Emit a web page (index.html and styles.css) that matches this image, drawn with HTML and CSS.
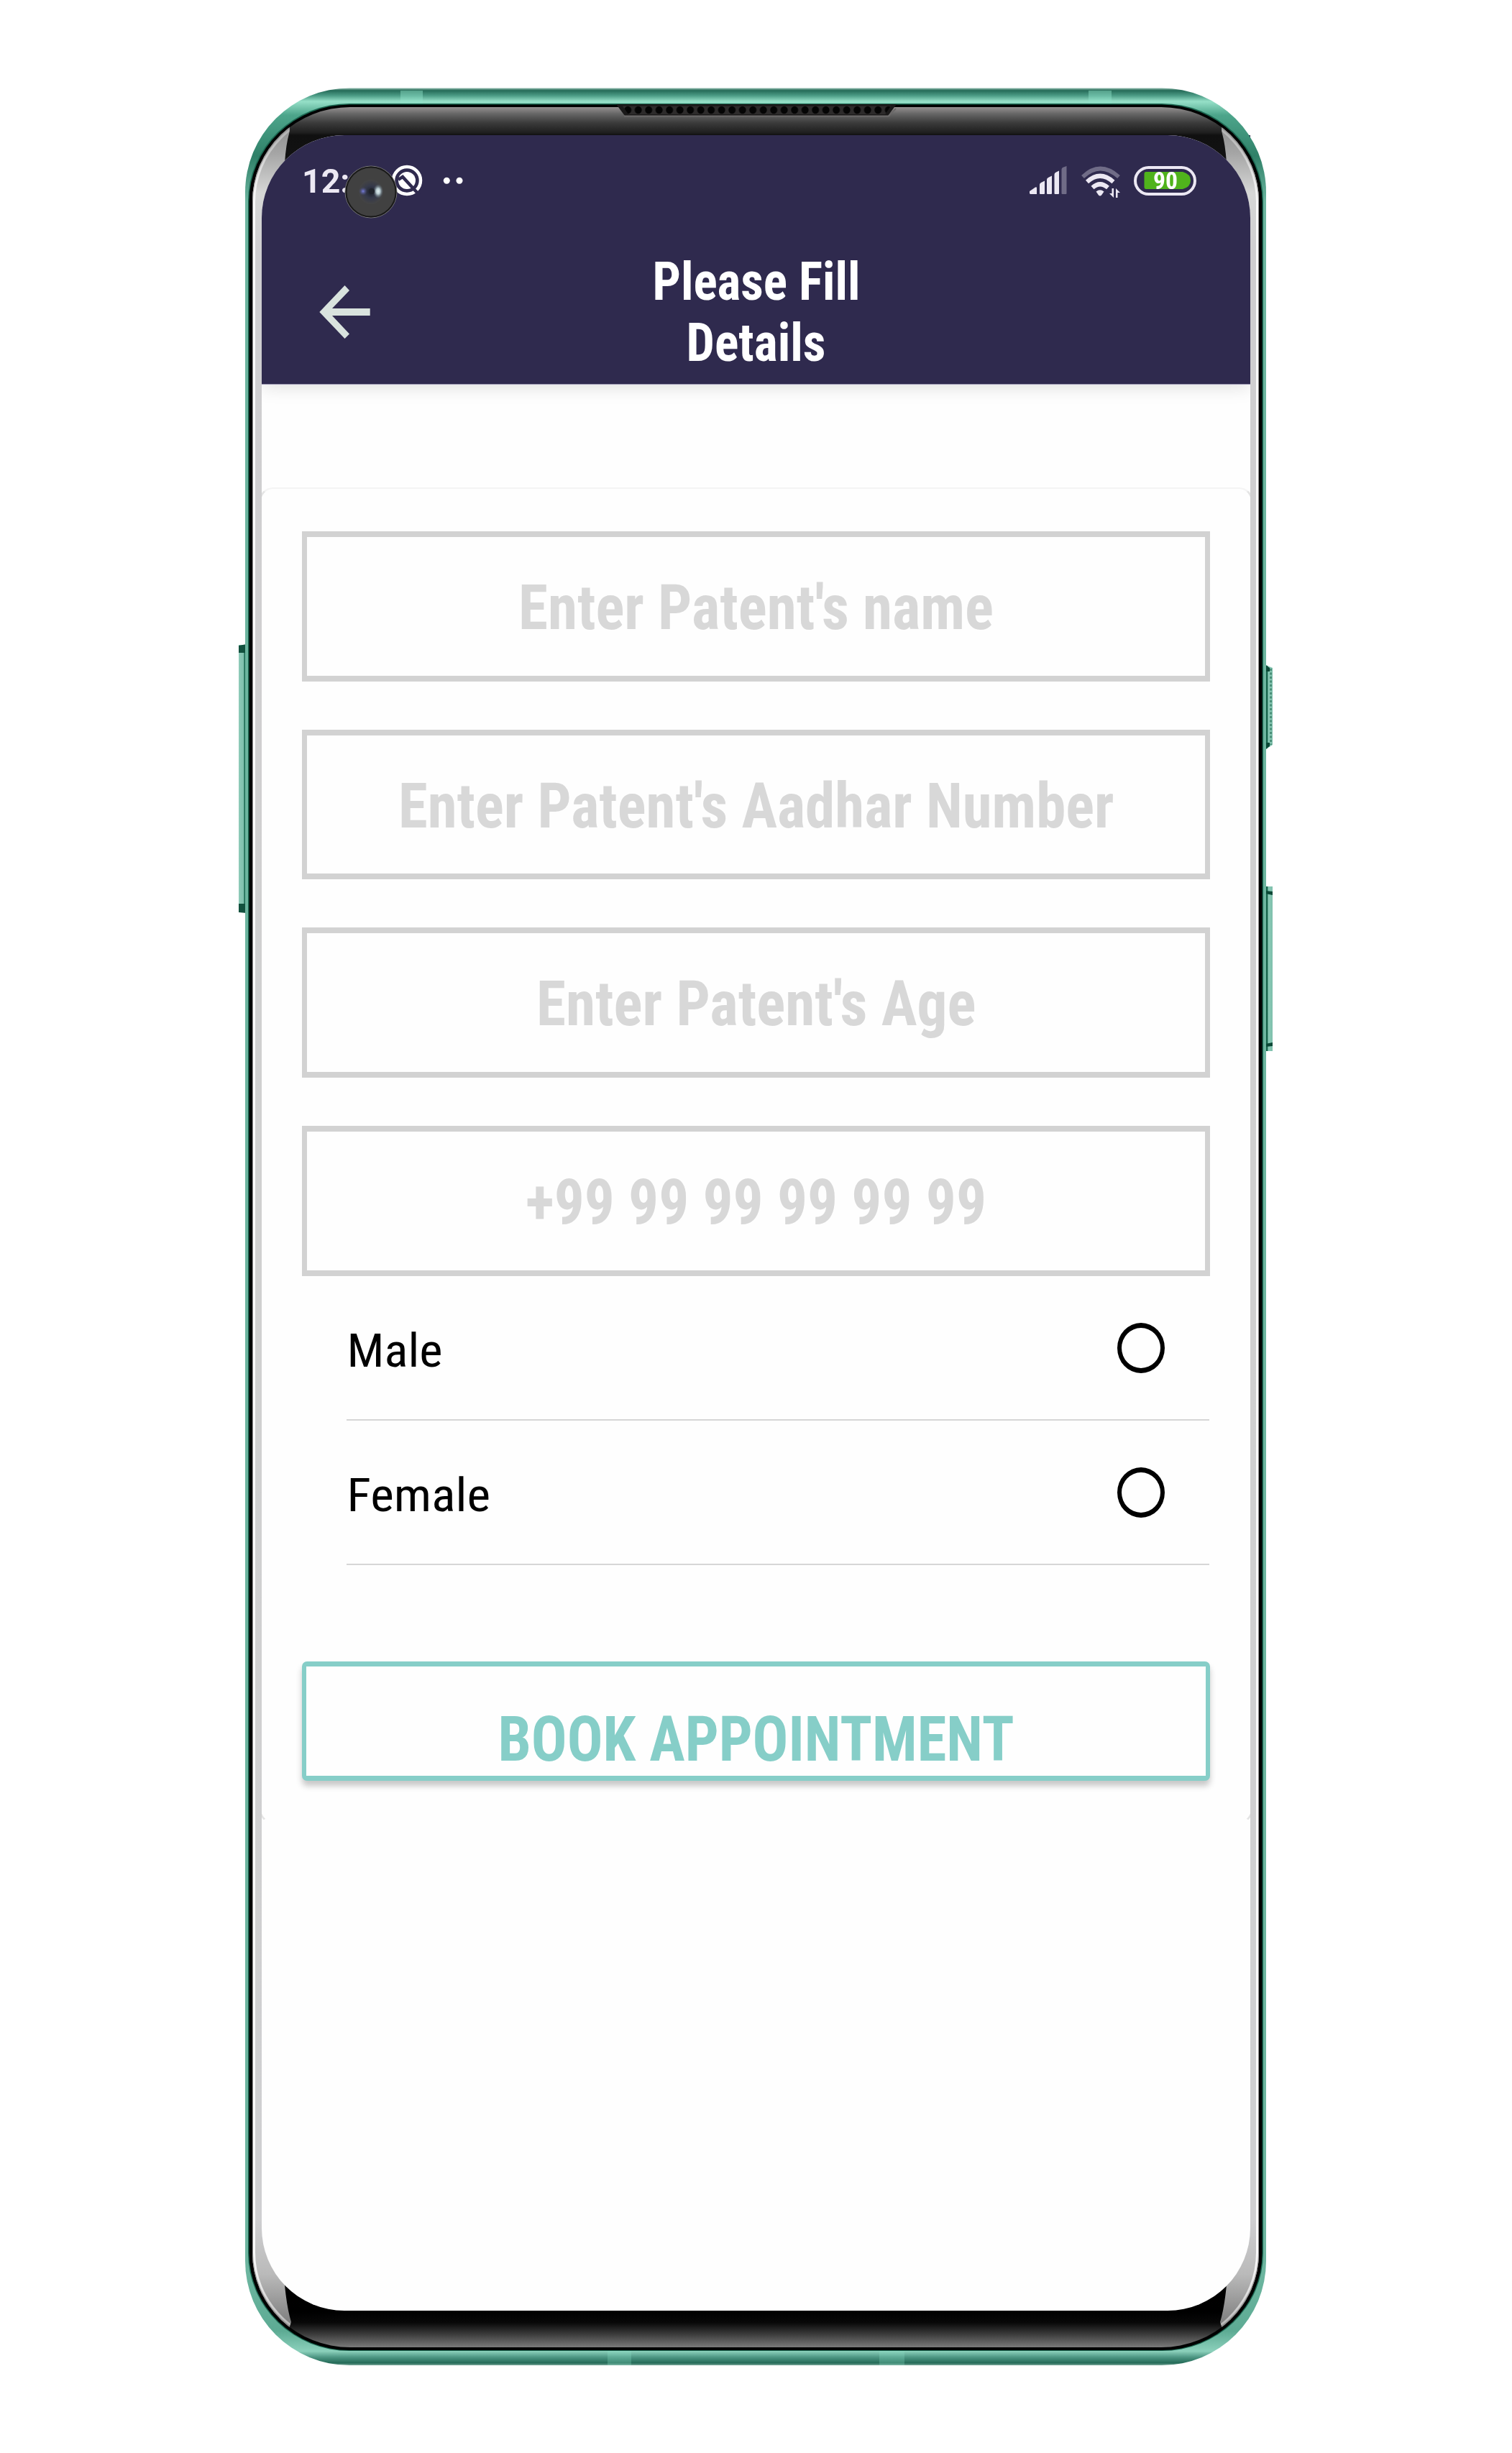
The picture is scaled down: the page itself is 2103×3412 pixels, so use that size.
FILE: index.html
```html
<!DOCTYPE html>
<html lang="en">
<head>
<meta charset="utf-8">
<title>Please Fill Details</title>
<link rel="stylesheet" href="styles.css">
</head>
<body>
<main class="stage">
  <svg class="device" viewBox="0 0 2103 3412" aria-hidden="true">
    <defs>
      <linearGradient id="metal" gradientUnits="userSpaceOnUse" x1="0" y1="122" x2="0" y2="3290">
        <stop offset="0" stop-color="#a9cdc1"/><stop offset=".0012" stop-color="#256b58"/>
        <stop offset=".0035" stop-color="#4c9c86"/><stop offset=".006" stop-color="#96e0c8"/>
        <stop offset=".012" stop-color="#4da58b"/><stop offset=".03" stop-color="#2f8068"/>
        <stop offset=".05" stop-color="#6cb59f"/><stop offset=".96" stop-color="#6cb59f"/>
        <stop offset=".985" stop-color="#5dab94"/><stop offset=".9938" stop-color="#8bd0bb"/>
        <stop offset=".9965" stop-color="#4c9582"/><stop offset=".999" stop-color="#256b58"/>
        <stop offset="1" stop-color="#7ba99b"/>
      </linearGradient>
      <linearGradient id="glass" gradientUnits="userSpaceOnUse" x1="0" y1="149" x2="0" y2="3265">
        <stop offset="0" stop-color="#959090"/><stop offset=".003" stop-color="#666"/>
        <stop offset=".007" stop-color="#3b3b3b"/><stop offset=".0115" stop-color="#1e1e1e"/>
        <stop offset=".0125" stop-color="#101010"/><stop offset=".035" stop-color="#151515"/>
        <stop offset=".984" stop-color="#000"/><stop offset=".989" stop-color="#080808"/>
        <stop offset=".994" stop-color="#3a3a3a"/><stop offset="1" stop-color="#7a7a7a"/>
      </linearGradient>
      <linearGradient id="edge" gradientUnits="userSpaceOnUse" x1="0" y1="170" x2="0" y2="3240">
        <stop offset="0" stop-color="#8b8b8b"/><stop offset=".014" stop-color="#a5a5a5"/>
        <stop offset=".032" stop-color="#d6d7d6"/><stop offset=".06" stop-color="#cfced0"/>
        <stop offset=".5" stop-color="#d0d0d0"/><stop offset=".95" stop-color="#cfcfd1"/>
        <stop offset=".975" stop-color="#bababa"/><stop offset="1" stop-color="#777"/>
      </linearGradient>
      <linearGradient id="rim" gradientUnits="userSpaceOnUse" x1="0" y1="152" x2="0" y2="3262">
        <stop offset="0" stop-color="#fff" stop-opacity=".2"/><stop offset=".02" stop-color="#fff" stop-opacity=".4"/>
        <stop offset=".045" stop-color="#fff" stop-opacity=".9"/><stop offset=".96" stop-color="#fff" stop-opacity=".9"/>
        <stop offset="1" stop-color="#fff" stop-opacity=".3"/>
      </linearGradient>
      <linearGradient id="keyL"><stop offset="0" stop-color="#8fcbb9"/><stop offset=".5" stop-color="#7fc0ad"/><stop offset=".62" stop-color="#1c6a53"/><stop offset="1" stop-color="#35866d"/></linearGradient>
      <linearGradient id="keyR"><stop offset="0" stop-color="#0d5841"/><stop offset=".4" stop-color="#17654c"/><stop offset=".5" stop-color="#8acbb7"/><stop offset="1" stop-color="#7fbfac"/></linearGradient>
      <clipPath id="face"><rect x="351" y="149" width="1400" height="3116" rx="136" ry="131"/></clipPath>
      <clipPath id="sides">
        <path d="M340 140L398 160Q405 176 402 186Q398 200 396 226V3178Q399 3210 405 3230L398 3250H340ZM1762 140L1704 160Q1697 176 1700 186Q1704 200 1706 226V3178Q1703 3210 1697 3230L1704 3250H1762Z"/>
      </clipPath>
      <pattern id="mesh" patternUnits="userSpaceOnUse" x="866" y="147" width="14.5" height="13">
        <rect width="14.5" height="13" fill="#2d2b2b"/><ellipse cx="7.2" cy="6" rx="5" ry="5.2" fill="#050505"/>
      </pattern>
    </defs>
    <path d="M1732 188h7v8z" fill="#2f2a4e"/>
    <rect x="332" y="897" width="13" height="372" fill="url(#keyL)"/>
    <path d="M332 898l11-2v12h-11zM332 1269l11 1v-13h-11z" fill="#12513e"/>
    <path d="M1758 924l12 5v107l-12 8z" fill="url(#keyR)"/>
    <path d="M1758 924l8 5v5h-8zM1758 1043l8-5v-5h-8z" fill="#0b4836"/>
    <path d="M1767.500 930v106" stroke="#4b9079" stroke-width="3" stroke-dasharray="3 2.500"/>
    <rect x="1758" y="1233" width="12" height="229" fill="url(#keyR)"/>
    <path d="M1760 1239l10 1v5l-10-2zM1760 1456l10-1v-5l-10 2z" fill="#0b4836"/>
    <rect x="341" y="122.500" width="1420" height="3167.500" rx="145" fill="url(#metal)"/>
    <g fill="#8fe3ca" opacity=".45">
      <rect x="557" y="126" width="31" height="20"/><rect x="1514" y="126" width="32" height="20"/>
      <rect x="845" y="3268" width="33" height="22" opacity=".6"/><rect x="1223" y="3268" width="35" height="22" opacity=".6"/>
    </g>
    <rect x="345" y="144" width="1412" height="3126" rx="141" ry="136" fill="#1b6650"/>
    <rect x="346.500" y="145.500" width="1409" height="3123.500" rx="140" ry="135" fill="#000"/>
    <rect x="351" y="149" width="1400" height="3116" rx="136" ry="131" fill="url(#glass)"/>
    <g clip-path="url(#face)"><g clip-path="url(#sides)">
      <rect x="340" y="140" width="1422" height="3130" fill="url(#edge)"/>
      <rect x="350.500" y="149" width="1401" height="3116" rx="136" ry="131" fill="none" stroke="#979595" stroke-width="3"/>
      <rect x="353.500" y="152" width="1395" height="3110" rx="134" ry="129" fill="none" stroke="url(#rim)" stroke-width="3"/>
    </g></g>
    <path d="M857 145H1247L1235 161H869Z" fill="#1a1919"/>
    <path d="M866 147.500H1239L1231 159H874Z" fill="url(#mesh)"/>
    <path d="M868 161.500H1236L1246 151" fill="none" stroke="#6b6969" stroke-width="2"/>
  </svg>

  <section class="screen">
    <header class="topbar">
      <div class="status">
        <span class="clock">12:</span>
        <svg class="status-left" viewBox="544 229 100 46">
          <circle cx="566" cy="251" r="19" fill="none" stroke="#fff" stroke-width="4.500"/>
          <circle cx="566" cy="251" r="12" fill="#fff"/>
          <path d="M554 250L560 246L583 271" stroke="#2f2a4e" stroke-width="4.500" fill="none"/>
          <circle cx="621.300" cy="251.300" r="4.500" fill="#fff"/><circle cx="639" cy="251.300" r="4.500" fill="#fff"/>
        </svg>
        <svg class="status-right" viewBox="1430 229 236 48">
          <g fill="#ece8f3">
            <path d="M1432 269V266L1440 260.500Q1442 259.500 1442 261.500V270H1433Z"/>
            <path d="M1446 256.500Q1446 255 1448 254L1453 251.500V269Q1453 270 1452 270H1447Q1446 270 1446 269Z"/>
            <path d="M1456 249.500Q1456 248 1458 247L1463 244.500V269Q1463 270 1462 270H1457Q1456 270 1456 269Z"/>
            <path d="M1466.500 243Q1466.500 241 1468 240L1473 237.500V269Q1473 270 1472 270H1467.500Q1466.500 270 1466.500 269Z"/>
            <path d="M1476.500 236Q1476.500 234 1478 233L1483.500 231V269Q1483.500 270 1482.500 270H1477.500Q1476.500 270 1476.500 269Z" opacity=".35"/>
            <path d="M1524.500 266.500Q1530 262 1535.500 266.500L1532 271.500Q1530 273.500 1528 271.500Z"/>
            <path d="M1546.500 262h2.500v13l-6-6h3.500zM1552 275v-13l6 6h-3.500v7z"/>
          </g>
          <g fill="none" stroke="#ece8f3">
            <path d="M1506 246Q1530 223 1556 246" stroke-width="5.500" opacity=".35"/>
            <path d="M1512 253Q1530 236.500 1548.500 253" stroke-width="6"/>
            <path d="M1519.500 261Q1530 251.500 1541 261" stroke-width="6"/>
            <rect x="1579" y="233" width="83" height="37" rx="18.500" stroke-width="4"/>
          </g>
          <path d="M1594 239H1645Q1656 242 1656 251T1645 263H1594Q1591.500 263 1591.500 260V242Q1591.500 239 1594 239Z" fill="#50b31c"/>
          <text class="level" x="1604" y="263" textLength="34" lengthAdjust="spacingAndGlyphs">90</text>
        </svg>
      </div>
      <div class="titlebar">
        <svg class="back" viewBox="444 396 72 76">
          <path d="M444.300 434L479.500 397L486 404L462 429H514.700V439H462L486 464.500L479.500 471Z" fill="#d9e3de"/>
        </svg>
        <svg class="title" viewBox="900 355 304 164" role="heading">
          <text x="907.500" y="417.300" textLength="289" lengthAdjust="spacingAndGlyphs">Please Fill</text>
          <text x="954.500" y="502.300" textLength="194" lengthAdjust="spacingAndGlyphs">Details</text>
        </svg>
      </div>
      <svg class="camera" viewBox="0 0 74 74">
        <defs>
          <radialGradient id="lens"><stop offset="0" stop-color="#1c2029"/><stop offset=".5" stop-color="#35394a"/><stop offset="1" stop-color="#444"/></radialGradient>
          <radialGradient id="glintBlue"><stop offset="0" stop-color="#7a80e0"/><stop offset="1" stop-color="#474c80" stop-opacity="0"/></radialGradient>
          <radialGradient id="glintWhite"><stop offset="0" stop-color="#e2f0f2"/><stop offset=".4" stop-color="#b5c8cd"/><stop offset="1" stop-color="#60707a" stop-opacity="0"/></radialGradient>
        </defs>
        <circle cx="37" cy="37" r="36" fill="#414141" stroke="#777" stroke-width="1"/>
        <circle cx="37" cy="37" r="34.500" fill="#414141" stroke="#191919" stroke-width="2"/>
        <circle cx="37" cy="37" r="17" fill="url(#lens)"/>
        <circle cx="26" cy="36" r="6" fill="url(#glintBlue)"/>
        <ellipse cx="47" cy="36" rx="7" ry="10" fill="url(#glintWhite)"/>
        <circle cx="38" cy="36" r="4" fill="#20242c"/>
      </svg>
    </header>

    <form class="card">
      <div class="field"><svg viewBox="0 0 1262 209"><text x="301" y="136" textLength="661" lengthAdjust="spacingAndGlyphs">Enter Patent's name</text></svg></div>
      <div class="field"><svg viewBox="0 0 1262 209"><text x="134" y="136" textLength="995.500" lengthAdjust="spacingAndGlyphs">Enter Patent's Aadhar Number</text></svg></div>
      <div class="field"><svg viewBox="0 0 1262 209"><text x="326" y="136" textLength="611.500" lengthAdjust="spacingAndGlyphs">Enter Patent's Age</text></svg></div>
      <div class="field"><svg viewBox="0 0 1262 209"><text x="311" y="136" textLength="641" lengthAdjust="spacingAndGlyphs">+99 99 99 99 99 99</text></svg></div>
      <div class="options">
        <label class="option">
          <svg class="option-name" viewBox="0 0 140 80"><text x="-2.500" y="61" textLength="133" lengthAdjust="spacingAndGlyphs">Male</text></svg>
          <span class="radio"></span>
        </label>
        <label class="option">
          <svg class="option-name wide" viewBox="0 0 210 80"><text x="-2.500" y="61" textLength="199.500" lengthAdjust="spacingAndGlyphs">Female</text></svg>
          <span class="radio"></span>
        </label>
      </div>
      <div class="book" role="button"><svg viewBox="0 0 1262 166"><text x="272.500" y="137.500" textLength="718" lengthAdjust="spacingAndGlyphs">BOOK APPOINTMENT</text></svg></div>
    </form>
  </section>
</main>
</body>
</html>
```
FILE: styles.css
```css
* { box-sizing: border-box; }
body {
  margin: 0;
  background: #fff;
  font-family: Roboto, "Liberation Sans", sans-serif;
}
svg { display: block; }
.stage {
  display: grid;
  width: 2103px;
  height: 3412px;
  overflow: hidden;
}
.device, .screen { grid-area: 1 / 1; }
.device { width: 2103px; height: 3412px; }
.screen {
  margin: 188px 0 0 364px;
  width: 1375px;
  height: 3026px;
  border-radius: 115px;
  overflow: hidden;
  background: #fefefe;
}

.topbar {
  position: relative;
  height: 346px;
  background: #2f2a4e;
  box-shadow: 0 1px 0 #9a95b2, 0 4px 24px rgba(0, 0, 0, .13);
}
.status {
  display: flex;
  align-items: flex-start;
  height: 170px;
  padding: 41px 73px 0 56px;
}
.clock {
  width: 124px;
  margin-top: -4px;
  font-size: 46.500px;
  line-height: 54px;
  font-weight: 700;
  color: #ece8f3;
}
.status-left { width: 100px; height: 46px; }
.status-right { width: 236px; height: 48px; margin-left: auto; }
.level {
  font-size: 34px;
  font-weight: 700;
  font-stretch: 75%;
  fill: #fff;
}
.camera {
  position: absolute;
  left: 115px;
  top: 42px;
  width: 74px;
  height: 74px;
}
.titlebar {
  display: grid;
  grid-template-columns: 456px 304px;
  padding-left: 80px;
}
.back { width: 72px; height: 76px; margin-top: 38px; }
.title {
  width: 304px;
  height: 164px;
  margin-top: -3px;
  overflow: visible;
  font-size: 73.500px;
  font-weight: 700;
  font-stretch: 75%;
  fill: #fff;
}

.card {
  display: flex;
  flex-direction: column;
  gap: 67px;
  width: 1383px;
  height: 1858px;
  margin: 144px 0 0 -4px;
  padding: 59px 57px 0;
  border: solid;
  border-width: 2px 3px;
  border-color: #f4f4f4 #e4e4e4 transparent;
  border-radius: 20px;
  background: #fefefe;
}
.field {
  flex: none;
  width: 1263px;
  height: 208.700px;
  border: solid #d2d2d2;
  border-width: 8px 7px;
}
.field svg { width: 1262px; height: 209px; margin: -8px 0 0 -7px; }
.field text, .book text {
  font-size: 87px;
  font-weight: 700;
  font-stretch: 75%;
  fill: #d8d8d8;
}
.options { width: 1200px; margin: -67px 0 0 62px; }
.option {
  display: flex;
  justify-content: space-between;
  height: 201px;
  padding: 65px 62px 0 3px;
  border-bottom: 2px solid #d6d6d6;
}
.option-name {
  width: 140px;
  height: 80px;
  overflow: visible;
  font-size: 64px;
  font-stretch: 75%;
  fill: #000;
}
.option-name.wide { width: 210px; }
.radio {
  width: 66px;
  height: 70px;
  border: solid #000;
  border-width: 7px 6.500px;
  border-radius: 50%;
}
.book {
  flex: none;
  width: 1263px;
  height: 166px;
  margin-top: 67px;
  border: solid #86cec8;
  border-width: 7px 6px;
  border-radius: 7px;
  background: #fefefe;
  box-shadow: 0 7px 9px rgba(0, 0, 0, .22);
}
.book svg { width: 1262px; height: 166px; margin: -7px 0 0 -6px; }
.book text { fill: #86cec8; }
```
